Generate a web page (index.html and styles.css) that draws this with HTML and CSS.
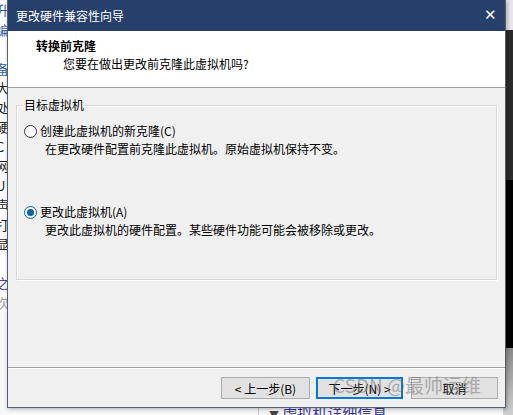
FILE: index.html
```html
<!DOCTYPE html>
<html lang="zh-CN">
<head>
    <meta charset="UTF-8">
    <title>更改硬件兼容性向导</title>
    <link rel="stylesheet" href="styles.css">
</head>
<body>
    <div class="behind-left">
        <span class="blue">升</span><span class="blue">编</span><span></span><span class="blue">备</span><span>大</span><span>处</span><span>硬</span><span>C</span><span>网</span><span>U</span><span>声</span><span>打</span><span>显</span><span></span><span class="purple">之</span><span class="grey">次</span>
    </div>
    <div class="behind-right"></div>
    <div class="behind-bottom">
        <span class="tri">▼</span> 虚拟机详细信息
    </div>

    <div class="dialog">
        <div class="titlebar">
            <span>更改硬件兼容性向导</span>
            <span class="close">&#x2715;</span>
        </div>
        <div class="header">
            <h1>转换前克隆</h1>
            <p>您要在做出更改前克隆此虚拟机吗?</p>
        </div>
        <div class="content">
            <fieldset class="group">
                <legend>目标虚拟机</legend>
                <label class="option">
                    <span class="radio"></span>
                    <span class="option-text">
                        <span class="option-title">创建此虚拟机的新克隆(C)</span>
                        <span class="option-desc">在更改硬件配置前克隆此虚拟机。原始虚拟机保持不变。</span>
                    </span>
                </label>
                <label class="option second">
                    <span class="radio checked"></span>
                    <span class="option-text">
                        <span class="option-title">更改此虚拟机(A)</span>
                        <span class="option-desc">更改此虚拟机的硬件配置。某些硬件功能可能会被移除或更改。</span>
                    </span>
                </label>
            </fieldset>
        </div>
        <div class="footer">
            <button class="btn back">&lt; 上一步(B)</button>
            <button class="btn default">下一步(N) &gt;</button>
            <button class="btn">取消</button>
        </div>
    </div>

    <div class="watermark">CSDN @最帅运维</div>
</body>
</html>
```

FILE: styles.css
```css
body {
    margin: 0;
    padding: 0;
    width: 513px;
    height: 415px;
    overflow: hidden;
    position: relative;
    background-color: #f7f7f7;
    font-family: "Noto Sans CJK SC", "DejaVu Sans", sans-serif;
    font-size: 12px;
    color: #000;
}
.behind-left {
    position: absolute;
    left: -4px;
    top: 0;
    width: 14px;
    display: flex;
    flex-direction: column;
    font-size: 13px;
    line-height: 19.5px;
    color: #222;
    background: #fff;
}
.behind-left span {
    height: 19.5px;
}
.behind-left .blue {
    color: #2f5fa8;
}
.behind-left .purple {
    color: #4b3fa0;
}
.behind-left .grey {
    color: #999;
}
.behind-right {
    position: absolute;
    right: 0;
    top: 0;
    width: 10px;
    height: 415px;
    background: linear-gradient(#e6e6e6 0, #e6e6e6 30px, #2b2b2b 30px, #2b2b2b 180px, #000 180px, #000 348px, #8a8a8a 348px, #d0d0d0 100%);
}
.behind-bottom {
    position: absolute;
    left: 258px;
    top: 402px;
    padding-left: 10px;
    border-left: 1px solid #c8c8c8;
    font-size: 15px;
    color: #3b3a9c;
    height: 20px;
}
.behind-bottom .tri {
    font-size: 10px;
    color: #444;
}
.dialog {
    position: absolute;
    left: 7px;
    top: 0;
    width: 497px;
    height: 407px;
    border: 1px solid #55606e;
    border-top: none;
    display: flex;
    flex-direction: column;
    background-color: #f0f0f0;
    box-shadow: 1px 1px 4px rgba(0,0,0,0.3);
}
.titlebar {
    height: 31px;
    background-color: #26406b;
    color: #fff;
    display: flex;
    justify-content: space-between;
    align-items: center;
    padding: 0 8px 0 8px;
    font-size: 12px;
}
.close {
    font-size: 15px;
    font-weight: 300;
    line-height: 1;
    font-family: "DejaVu Sans", sans-serif;
}
.header {
    background-color: #fff;
    border-bottom: 1px solid #a0a0a0;
    box-sizing: border-box;
    height: 57px;
    padding: 6px 0 0 28px;
}
.header h1 {
    margin: 0;
    font-size: 12px;
    font-weight: bold;
    line-height: 18px;
}
.header p {
    margin: 0;
    padding-left: 27px;
    line-height: 18px;
}
.content {
    flex-grow: 1;
    padding: 9px 8px 0 8px;
    box-sizing: border-box;
}
.group {
    margin: 0;
    padding: 0 0 0 6px;
    height: 183px;
    box-sizing: border-box;
    border: 1px solid #d8d8d8;
    box-shadow: inset 1px 1px 0 #fff, 1px 1px 0 #fff;
}
.group legend {
    padding: 0 1px;
    margin-left: 0;
    line-height: 16px;
}
.option {
    display: flex;
    align-items: flex-start;
    margin-top: 9px;
}
.option.second {
    margin-top: 45px;
}
.radio {
    width: 11px;
    height: 11px;
    border: 1px solid #333;
    border-radius: 50%;
    background: #fff;
    margin-top: 3px;
    margin-left: 1px;
    margin-right: 3px;
    position: relative;
    flex-shrink: 0;
}
.radio.checked {
    border-color: #0063b1;
}
.radio.checked::after {
    content: "";
    position: absolute;
    left: 2px;
    top: 2px;
    width: 7px;
    height: 7px;
    border-radius: 50%;
    background: #0063b1;
}
.option-text {
    display: flex;
    flex-direction: column;
}
.option-title,
.option-desc {
    line-height: 18px;
}
.option-desc {
    padding-left: 5px;
}
.footer {
    height: 40px;
    border-top: 1px solid #a0a0a0;
    box-shadow: inset 0 1px 0 #fff;
    display: flex;
    justify-content: flex-end;
    align-items: flex-start;
    gap: 8px;
    padding: 9px 7px 0 0;
    box-sizing: border-box;
}
.btn {
    width: 87px;
    height: 22px;
    padding: 0;
    background-color: #e1e1e1;
    border: 1px solid #adadad;
    font-family: "Noto Sans CJK SC", "DejaVu Sans", sans-serif;
    font-size: 12px;
    color: #000;
}
.btn.back {
    width: 89px;
    margin-right: -2px;
}
.btn.default {
    border: 2px solid #0078d7;
}
.watermark {
    position: absolute;
    z-index: 5;
    left: 333px;
    top: 371px;
    font-family: "Noto Sans CJK SC", sans-serif;
    font-size: 19px;
    color: rgba(120, 120, 120, 0.55);
    pointer-events: none;
}
```
